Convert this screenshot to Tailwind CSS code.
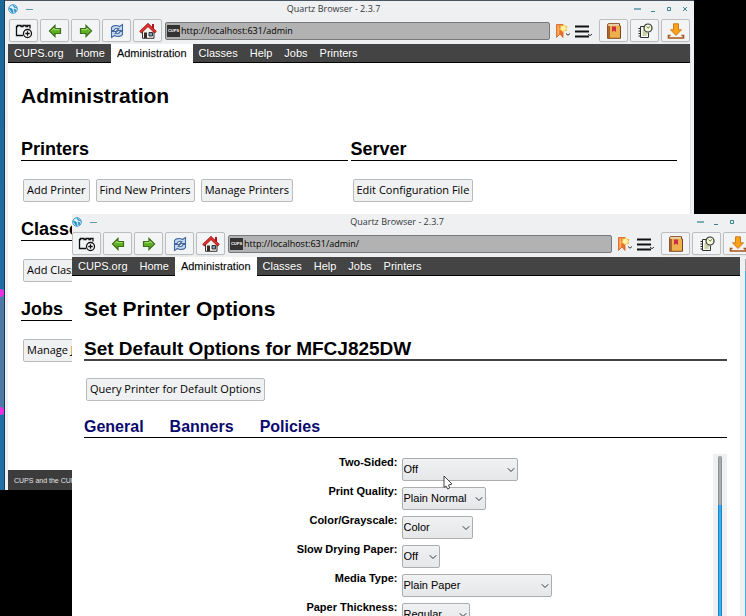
<!DOCTYPE html>
<html lang="en">
<head>
    <meta charset="UTF-8">
    <meta name="viewport" content="width=device-width, initial-scale=1.0">
    <title>Quartz Browser - 2.3.7</title>
    <script src="https://cdn.jsdelivr.net/npm/@tailwindcss/browser@4"></script>
</head>
<body class="bg-black text-black font-['Liberation_Sans',Arial,sans-serif]">

    <!-- ICONS -->
    <svg class="hidden" aria-hidden="true">
        <symbol id="i-globe" viewBox="0 0 10 10">
            <circle cx="5" cy="5" r="4.3" fill="#d8f0fa" stroke="#3a9cc8" stroke-width="1"/>
            <path d="M1 4l3 1 1 3-1 1M5 1l1 2 3 1M6 5l2 1-1 2z" fill="#2b8fc0" stroke="#2b8fc0" stroke-width=".8"/>
        </symbol>
        <symbol id="i-newtab" viewBox="0 0 18 16">
            <path d="M8 12.500H1.500V3.500h1v-1h3.500v1h2v-1h3v1h1.500v-1H15v3" fill="none" stroke="#111" stroke-width="1.300"/>
            <circle cx="12.500" cy="10.500" r="4" fill="#fff" stroke="#111" stroke-width="1.300"/>
            <path d="M12.500 8.300v4.400M10.300 10.500h4.400" stroke="#111" stroke-width="1.300"/>
        </symbol>
        <symbol id="i-back" viewBox="0 0 18 16">
            <path d="M3.500 8L9 2.500V5.500H14.500V10.500H9V13.500z" fill="#5fb021" stroke="#3b6d1c" stroke-width="1.200"/>
            <path d="M5.500 7.500L8.200 5v1.600h5.300" fill="none" stroke="#a6e070" stroke-width="1"/>
        </symbol>
        <symbol id="i-forward" viewBox="0 0 18 16">
            <path d="M14.500 8L9 2.500V5.500H3.500V10.500H9V13.500z" fill="#5fb021" stroke="#3b6d1c" stroke-width="1.200"/>
            <path d="M12.500 7.500L9.800 5v1.600H4.500" fill="none" stroke="#a6e070" stroke-width="1"/>
        </symbol>
        <symbol id="i-reload" viewBox="0 0 18 16">
            <path d="M3.500 7.500V4.500C4.500 2.500 9 1.800 11.500 3.500L14.500 1.500V7.500H9L10.800 5.700C9 4.800 6.500 5.500 6 7.500z" fill="#c5d9f2" stroke="#41689f" stroke-width="1.100"/>
            <path d="M14.500 8.500V11.500C13.500 13.500 9 14.200 6.500 12.500L3.500 14.500V8.500H9L7.200 10.300C9 11.200 11.500 10.500 12 8.500z" fill="#c5d9f2" stroke="#41689f" stroke-width="1.100"/>
        </symbol>
        <symbol id="i-home" viewBox="0 0 18 16">
            <path d="M3.500 8v7.300h11.500V8L9 3z" fill="#f3f3ee" stroke="#333" stroke-width="1"/>
            <path d="M13 1h2v5h-2z" fill="#b01818"/>
            <path d="M1.300 9.300L9 2l7.700 7.300" fill="none" stroke="#8e1212" stroke-width="3"/>
            <path d="M1.500 9L9 2l7.500 7" fill="none" stroke="#e03030" stroke-width="2"/>
            <path d="M5 9.500h3v5.500H5z" fill="#3a2c26"/>
            <path d="M10 9.500h3.500v3.500H10z" fill="#7d9ec4" stroke="#222" stroke-width=".9"/>
        </symbol>
        <symbol id="i-bookmark" viewBox="0 0 16 16">
            <path d="M1.500 1.500h6.500V14.500L5 11 1.500 14.500z" fill="#ee6f27" stroke="#cf5a17" stroke-width=".7"/>
            <path d="M2.300 2.200h2V11L2.300 13z" fill="#ffb15c"/>
            <path d="M8.500 1.500l1.300 1.700 2.200.4-1 2 .6 2-2.100 0-1.700 1.300-1.200-1.700-2-.7 1.100-1.700-.4-2 2.100.2z" fill="#fff3a8" stroke="#ebb93c" stroke-width=".9"/>
            <path d="M11 10.500l2 1.700 2-1.700" fill="none" stroke="#333" stroke-width="1"/>
        </symbol>
        <symbol id="i-menu" viewBox="0 0 18 16">
            <path d="M0 3.500h14M0 8.500h14M0 13.500h14" stroke="#111" stroke-width="2"/>
            <path d="M13 11l2 1.700 2-1.700" fill="none" stroke="#333" stroke-width="1"/>
        </symbol>
        <symbol id="i-book" viewBox="0 0 18 16">
            <path d="M2.500 2.500C2.500 1 3 .7 4 .7h10.500V3H15.500v12.300h-13z" fill="#edb04c" stroke="#7a4420" stroke-width="1"/>
            <path d="M3.500 1.300h10.500v1.200H3.500z" fill="#efe6dc"/>
            <path d="M2.500 3h2.500v12.300H2.500z" fill="#a8652c"/>
            <path d="M7 3.500h4v5.500L9 7.500 7 9z" fill="#cc2a46"/>
        </symbol>
        <symbol id="i-history" viewBox="0 0 18 16">
            <path d="M8.500 3.500H4.500v11h8v-5" fill="#fafaf0" stroke="#333" stroke-width="1"/>
            <path d="M2.500 5.500h2.500M2.500 8h2.500M2.500 10.500h2.500M2.500 13h2.500" stroke="#222" stroke-width="1"/>
            <path d="M6.500 8h2M6.500 10h5M6.500 12h4" stroke="#98a860" stroke-width="1"/>
            <circle cx="12" cy="5" r="4" fill="#f4f7dc" stroke="#333" stroke-width="1.200"/>
            <path d="M10.500 3.500L12 5.200l2.200-2" fill="none" stroke="#5d8a28" stroke-width="1"/>
        </symbol>
        <symbol id="i-download" viewBox="0 0 18 16">
            <path d="M6.500 .8h5v6h3L9 12.500 3.500 6.800h3z" fill="#f9a11b" stroke="#c9740c" stroke-width=".9"/>
            <path d="M3.500 12.500H1.500V15h15v-2.500h-2" fill="none" stroke="#a9541a" stroke-width="1.600"/>
        </symbol>
        <symbol id="i-chevron" viewBox="0 0 8 8">
            <path d="M.8 2.300L4 5.500 7.200 2.300" fill="none" stroke="#333" stroke-width="1"/>
        </symbol>
    </svg>

    <main class="relative h-screen overflow-hidden">

        <!-- Wallpaper strip -->
        <div class="absolute left-0 top-0 flex h-[490px] w-[5px] flex-col border-r border-[#123c5c] bg-[#4f78a6]">
            <div class="h-[289px] bg-linear-to-b from-[#1b6797] to-[#1f6da3]"></div>
            <div class="h-2 rounded-r bg-[#ee2fe6]"></div>
            <div class="h-[110px]"></div>
            <div class="h-2 rounded-r bg-[#ee2fe6]"></div>
            <div class="flex-1 bg-[#1e6fa6]"></div>
        </div>

        <!-- ADMINISTRATION WINDOW -->
        <section class="absolute left-[5px] right-[52px] top-0 flex h-[490px] flex-col border-t border-[#4a5560] bg-[#eff0f1]">
            <header class="flex h-4 items-center gap-2 pl-[3px] pr-[5px] text-[#3f8292]">
                <svg class="size-[10px]"><use href="#i-globe"/></svg>
                <span class="h-px w-[7px] bg-[#5f9dac]"></span>
                <h2 class="flex-1 text-center font-['Open_Sans',sans-serif] text-[9px] text-[#33373b]">Quartz Browser - 2.3.7</h2>
                <span class="h-[2px] w-[7px] bg-[#7fabb5]"></span>
                <svg class="size-2" viewBox="0 0 8 8" stroke="currentColor" fill="none"><path d="M2 6.500h4"/></svg>
                <svg class="size-2" viewBox="0 0 8 8" stroke="currentColor" fill="none"><path d="M2.500 2.500h3v3h-3z"/></svg>
                <svg class="size-2" viewBox="0 0 8 8" stroke="currentColor" fill="none"><path d="M2 2l4 4M6 2L2 6"/></svg>
            </header>
            <div class="flex h-[27px] items-center gap-[2px] pl-1 pr-1">
                <button aria-label="New tab" class="flex h-[23px] w-[29px] items-center justify-center rounded-xs border border-[#bcbebf] bg-[#f3f4f5] shadow-xs"><svg class="h-4 w-[18px]"><use href="#i-newtab"/></svg></button>
                <button aria-label="Back" class="flex h-[23px] w-[29px] items-center justify-center rounded-xs border border-[#bcbebf] bg-[#f3f4f5] shadow-xs"><svg class="h-4 w-[18px]"><use href="#i-back"/></svg></button>
                <button aria-label="Forward" class="flex h-[23px] w-[29px] items-center justify-center rounded-xs border border-[#bcbebf] bg-[#f3f4f5] shadow-xs"><svg class="h-4 w-[18px]"><use href="#i-forward"/></svg></button>
                <button aria-label="Reload" class="flex h-[23px] w-[29px] items-center justify-center rounded-xs border border-[#bcbebf] bg-[#f3f4f5] shadow-xs"><svg class="h-4 w-[18px]"><use href="#i-reload"/></svg></button>
                <button aria-label="Home" class="flex h-[23px] w-[29px] items-center justify-center rounded-xs border border-[#bcbebf] bg-[#f3f4f5] shadow-xs"><svg class="h-4 w-[18px]"><use href="#i-home"/></svg></button>
                <div class="ml-px flex h-[18px] flex-1 items-center rounded-xs border border-[#77797a] bg-[#b2b2b2] pl-px">
                    <span class="flex h-3 w-[13px] items-center justify-center bg-[#333] text-[4px] font-bold text-white">CUPS</span>
                    <input aria-label="Address" value="http://localhost:631/admin" class="min-w-0 flex-1 pl-px font-['Open_Sans',sans-serif] text-[9px] outline-none">
                </div>
                <button aria-label="Bookmark" class="ml-[3px] w-4"><svg class="size-4"><use href="#i-bookmark"/></svg></button>
                <button aria-label="Menu" class="ml-[2px] mr-1 w-[18px]"><svg class="h-4 w-[18px]"><use href="#i-menu"/></svg></button>
                <button aria-label="Bookmarks" class="flex h-[23px] w-[29px] items-center justify-center rounded-xs border border-[#bcbebf] bg-[#f3f4f5] shadow-xs"><svg class="h-4 w-[18px]"><use href="#i-book"/></svg></button>
                <button aria-label="History" class="flex h-[23px] w-[29px] items-center justify-center rounded-xs border border-[#bcbebf] bg-[#f3f4f5] shadow-xs"><svg class="h-4 w-[18px]"><use href="#i-history"/></svg></button>
                <button aria-label="Downloads" class="flex h-[23px] w-[29px] items-center justify-center rounded-xs border border-[#bcbebf] bg-[#f3f4f5] shadow-xs"><svg class="h-4 w-[18px]"><use href="#i-download"/></svg></button>
            </div>

            <div class="ml-[3px] mr-[3px] flex flex-1 flex-col border-r border-[#dfe1e2] bg-white">
                <nav class="flex h-[19px] border-b border-black bg-[#444] text-[11px] leading-[18px] text-white text-shadow-xs">
                    <a href="#" class="px-[6px]">CUPS.org</a>
                    <a href="#" class="px-[6px]">Home</a>
                    <a href="#" class="h-[19px] bg-white px-[6px] text-black">Administration</a>
                    <a href="#" class="px-[6px]">Classes</a>
                    <a href="#" class="px-[6px]">Help</a>
                    <a href="#" class="px-[6px]">Jobs</a>
                    <a href="#" class="px-[6px]">Printers</a>
                </nav>
                <div class="flex-1 pl-[13px] pr-[13px]">
                    <h1 class="pt-[21px] text-[21px] font-bold leading-6">Administration</h1>
                    <div class="grid grid-cols-2 gap-[3px] pt-[31px]">
                        <div>
                            <h2 class="border-b border-black text-[18px] font-bold leading-[21px]">Printers</h2>
                            <div class="flex h-[58px] gap-[6px] pl-[2px] pt-[18px] font-['Open_Sans',sans-serif] text-[11px] whitespace-nowrap">
                                <button class="h-[23px] rounded-xs border border-[#b9bbbc] bg-[#f0f1f2] px-[3px]">Add Printer</button>
                                <button class="h-[23px] rounded-xs border border-[#b9bbbc] bg-[#f0f1f2] px-[3px]">Find New Printers</button>
                                <button class="h-[23px] rounded-xs border border-[#b9bbbc] bg-[#f0f1f2] px-[3px]">Manage Printers</button>
                            </div>
                            <h2 class="border-b border-black text-[18px] font-bold leading-[21px]">Classes</h2>
                            <div class="flex h-[58px] gap-[6px] pl-[2px] pt-[18px] font-['Open_Sans',sans-serif] text-[11px] whitespace-nowrap">
                                <button class="h-[23px] rounded-xs border border-[#b9bbbc] bg-[#f0f1f2] px-[3px]">Add Class</button>
                            </div>
                            <h2 class="border-b border-black text-[18px] font-bold leading-[21px]">Jobs</h2>
                            <div class="flex h-[58px] gap-[6px] pl-[2px] pt-[18px] font-['Open_Sans',sans-serif] text-[11px] whitespace-nowrap">
                                <button class="h-[23px] rounded-xs border border-[#b9bbbc] bg-[#f0f1f2] px-[3px]">Manage Jobs</button>
                            </div>
                        </div>
                        <div>
                            <h2 class="border-b border-black text-[18px] font-bold leading-[21px]">Server</h2>
                            <div class="flex h-[58px] gap-[6px] pl-[2px] pt-[18px] font-['Open_Sans',sans-serif] text-[11px] whitespace-nowrap">
                                <button class="h-[23px] rounded-xs border border-[#b9bbbc] bg-[#f0f1f2] px-[3px]">Edit Configuration File</button>
                            </div>
                        </div>
                    </div>
                </div>
                <footer class="h-5 bg-[#3c3c3c] px-[6px] text-[7px] leading-[22px] text-[#e4e4e4]">CUPS and the CUPS logo</footer>
            </div>
        </section>

        <!-- SET PRINTER OPTIONS WINDOW -->
        <section class="absolute bottom-0 left-[72px] right-[-8px] top-[214px] flex flex-col overflow-hidden bg-[#eff0f1]">
            <header class="flex h-4 items-center gap-2 pr-[2px] text-[#3f8292]">
                <svg class="size-[10px]"><use href="#i-globe"/></svg>
                <span class="h-px w-[7px] bg-[#5f9dac]"></span>
                <h2 class="flex-1 text-center font-['Open_Sans',sans-serif] text-[9px] text-[#33373b]">Quartz Browser - 2.3.7</h2>
                <span class="h-[2px] w-[7px] bg-[#7fabb5]"></span>
                <svg class="size-2" viewBox="0 0 8 8" stroke="currentColor" fill="none"><path d="M2 6.500h4"/></svg>
                <svg class="size-2" viewBox="0 0 8 8" stroke="currentColor" fill="none"><path d="M2.500 2.500h3v3h-3z"/></svg>
                <svg class="size-2" viewBox="0 0 8 8" stroke="currentColor" fill="none"><path d="M2 2l4 4M6 2L2 6"/></svg>
            </header>
            <div class="flex h-[27px] items-center gap-[2px] pr-[2px]">
                <button aria-label="New tab" class="flex h-[23px] w-[29px] items-center justify-center rounded-xs border border-[#bcbebf] bg-[#f3f4f5] shadow-xs"><svg class="h-4 w-[18px]"><use href="#i-newtab"/></svg></button>
                <button aria-label="Back" class="flex h-[23px] w-[29px] items-center justify-center rounded-xs border border-[#bcbebf] bg-[#f3f4f5] shadow-xs"><svg class="h-4 w-[18px]"><use href="#i-back"/></svg></button>
                <button aria-label="Forward" class="flex h-[23px] w-[29px] items-center justify-center rounded-xs border border-[#bcbebf] bg-[#f3f4f5] shadow-xs"><svg class="h-4 w-[18px]"><use href="#i-forward"/></svg></button>
                <button aria-label="Reload" class="flex h-[23px] w-[29px] items-center justify-center rounded-xs border border-[#bcbebf] bg-[#f3f4f5] shadow-xs"><svg class="h-4 w-[18px]"><use href="#i-reload"/></svg></button>
                <button aria-label="Home" class="flex h-[23px] w-[29px] items-center justify-center rounded-xs border border-[#bcbebf] bg-[#f3f4f5] shadow-xs"><svg class="h-4 w-[18px]"><use href="#i-home"/></svg></button>
                <div class="ml-px flex h-[18px] flex-1 items-center rounded-xs border border-[#77797a] bg-[#b2b2b2] pl-px">
                    <span class="flex h-3 w-[13px] items-center justify-center bg-[#333] text-[4px] font-bold text-white">CUPS</span>
                    <input aria-label="Address" value="http://localhost:631/admin/" class="min-w-0 flex-1 pl-px font-['Open_Sans',sans-serif] text-[9px] outline-none">
                </div>
                <button aria-label="Bookmark" class="ml-[3px] w-4"><svg class="size-4"><use href="#i-bookmark"/></svg></button>
                <button aria-label="Menu" class="ml-[2px] mr-1 w-[18px]"><svg class="h-4 w-[18px]"><use href="#i-menu"/></svg></button>
                <button aria-label="Bookmarks" class="flex h-[23px] w-[29px] items-center justify-center rounded-xs border border-[#bcbebf] bg-[#f3f4f5] shadow-xs"><svg class="h-4 w-[18px]"><use href="#i-book"/></svg></button>
                <button aria-label="History" class="flex h-[23px] w-[29px] items-center justify-center rounded-xs border border-[#bcbebf] bg-[#f3f4f5] shadow-xs"><svg class="h-4 w-[18px]"><use href="#i-history"/></svg></button>
                <button aria-label="Downloads" class="flex h-[23px] w-[29px] items-center justify-center rounded-xs border border-[#bcbebf] bg-[#f3f4f5] shadow-xs"><svg class="h-4 w-[18px]"><use href="#i-download"/></svg></button>
            </div>

            <div class="flex min-h-0 flex-1">
                <div class="flex min-w-0 flex-1 flex-col bg-white">
                    <nav class="flex h-[19px] shrink-0 border-b border-black bg-[#444] pr-[6px] text-[11px] leading-[18px] text-white text-shadow-xs">
                        <a href="#" class="px-[6px]">CUPS.org</a>
                        <a href="#" class="px-[6px]">Home</a>
                        <a href="#" class="h-[19px] bg-white px-[6px] text-black">Administration</a>
                        <a href="#" class="px-[6px]">Classes</a>
                        <a href="#" class="px-[6px]">Help</a>
                        <a href="#" class="px-[6px]">Jobs</a>
                        <a href="#" class="px-[6px]">Printers</a>
                    </nav>
                    <div class="flex min-h-0 flex-1 flex-col pl-3 pr-[13px]">
                        <h1 class="pt-[21px] text-[21px] font-bold leading-6">Set Printer Options</h1>
                        <h2 class="mt-[17px] border-b-2 border-[#444] text-[19px] font-bold leading-[21px]">Set Default Options for MFCJ825DW</h2>
                        <div class="pl-[2px] pt-[17px]">
                            <button class="block h-[23px] rounded-xs border border-[#b9bbbc] bg-[#f0f1f2] px-[3px] font-['Open_Sans',sans-serif] text-[11px]">Query Printer for Default Options</button>
                        </div>
                        <div class="mt-4 flex gap-[26px] border-b border-black text-[16px] font-bold leading-[20px] text-[#0a0a6e]">
                            <a href="#">General</a>
                            <a href="#">Banners</a>
                            <a href="#">Policies</a>
                        </div>
                        <form class="mt-4 flex min-h-0 flex-1 overflow-hidden">
                            <div class="min-w-0 flex-1 pt-1 pl-[2px]">
                                <div class="grid h-[29px] grid-cols-2 gap-1 text-[11px]">
                                    <label for="sided" class="text-right font-bold leading-[9px]">Two-Sided:</label>
                                    <div class="grid w-[116px] items-center">
                                        <select id="sided" class="col-start-1 row-start-1 h-[23px] self-start appearance-none rounded-xs border border-[#abadae] bg-linear-to-b from-[#f0f1f2] to-[#e6e7e9] pl-px"><option>Off</option></select>
                                        <svg class="pointer-events-none col-start-1 row-start-1 mb-[6px] mr-[3px] size-2 justify-self-end"><use href="#i-chevron"/></svg>
                                    </div>
                                </div>
                                <div class="grid h-[29px] grid-cols-2 gap-1 text-[11px]">
                                    <label for="quality" class="text-right font-bold leading-[9px]">Print Quality:</label>
                                    <div class="grid w-[84px] items-center">
                                        <select id="quality" class="col-start-1 row-start-1 h-[23px] self-start appearance-none rounded-xs border border-[#abadae] bg-linear-to-b from-[#f0f1f2] to-[#e6e7e9] pl-px"><option>Plain Normal</option></select>
                                        <svg class="pointer-events-none col-start-1 row-start-1 mb-[6px] mr-[3px] size-2 justify-self-end"><use href="#i-chevron"/></svg>
                                    </div>
                                </div>
                                <div class="grid h-[29px] grid-cols-2 gap-1 text-[11px]">
                                    <label for="color" class="text-right font-bold leading-[9px]">Color/Grayscale:</label>
                                    <div class="grid w-[71px] items-center">
                                        <select id="color" class="col-start-1 row-start-1 h-[23px] self-start appearance-none rounded-xs border border-[#abadae] bg-linear-to-b from-[#f0f1f2] to-[#e6e7e9] pl-px"><option>Color</option></select>
                                        <svg class="pointer-events-none col-start-1 row-start-1 mb-[6px] mr-[3px] size-2 justify-self-end"><use href="#i-chevron"/></svg>
                                    </div>
                                </div>
                                <div class="grid h-[29px] grid-cols-2 gap-1 text-[11px]">
                                    <label for="drying" class="text-right font-bold leading-[9px]">Slow Drying Paper:</label>
                                    <div class="grid w-[38px] items-center">
                                        <select id="drying" class="col-start-1 row-start-1 h-[23px] self-start appearance-none rounded-xs border border-[#abadae] bg-linear-to-b from-[#f0f1f2] to-[#e6e7e9] pl-px"><option>Off</option></select>
                                        <svg class="pointer-events-none col-start-1 row-start-1 mb-[6px] mr-[3px] size-2 justify-self-end"><use href="#i-chevron"/></svg>
                                    </div>
                                </div>
                                <div class="grid h-[29px] grid-cols-2 gap-1 text-[11px]">
                                    <label for="media" class="text-right font-bold leading-[9px]">Media Type:</label>
                                    <div class="grid w-[150px] items-center">
                                        <select id="media" class="col-start-1 row-start-1 h-[23px] self-start appearance-none rounded-xs border border-[#abadae] bg-linear-to-b from-[#f0f1f2] to-[#e6e7e9] pl-px"><option>Plain Paper</option></select>
                                        <svg class="pointer-events-none col-start-1 row-start-1 mb-[6px] mr-[3px] size-2 justify-self-end"><use href="#i-chevron"/></svg>
                                    </div>
                                </div>
                                <div class="grid h-[29px] grid-cols-2 gap-1 text-[11px]">
                                    <label for="thickness" class="text-right font-bold leading-[9px]">Paper Thickness:</label>
                                    <div class="grid w-[68px] items-center">
                                        <select id="thickness" class="col-start-1 row-start-1 h-[23px] self-start appearance-none rounded-xs border border-[#abadae] bg-linear-to-b from-[#f0f1f2] to-[#e6e7e9] pl-px"><option>Regular</option></select>
                                        <svg class="pointer-events-none col-start-1 row-start-1 mb-[6px] mr-[3px] size-2 justify-self-end"><use href="#i-chevron"/></svg>
                                    </div>
                                </div>
                            </div>
                            <!-- Options scrollbar -->
                            <div class="flex w-[14px] flex-col items-center bg-[#eff0f1] pt-[2px]">
                                <div class="h-[49px] w-1 rounded-t border-x border-[#8f9193] bg-[#a9abad]"></div>
                                <div class="w-1 flex-1 border-x border-[#1d83cb] bg-[#3daee9]"></div>
                            </div>
                        </form>
                    </div>
                </div>
                <!-- Page scrollbar -->
                <div class="flex w-[14px] flex-col items-center bg-[#eff0f1] pt-[2px]">
                    <div class="h-3 w-1 bg-[#a9abad]"></div>
                    <div class="w-1 flex-1 bg-[#3daee9]"></div>
                </div>
            </div>
        </section>

        <!-- Mouse pointer -->
        <svg class="absolute left-[443px] top-[475px] h-[15px] w-[10px]" viewBox="0 0 10 15">
            <path d="M1 1v11.500l2-1.500 1.700 3 2-1-1.200-3L9 9z" fill="#fff" stroke="#444" stroke-width="1"/>
        </svg>
    </main>
</body>
</html>
